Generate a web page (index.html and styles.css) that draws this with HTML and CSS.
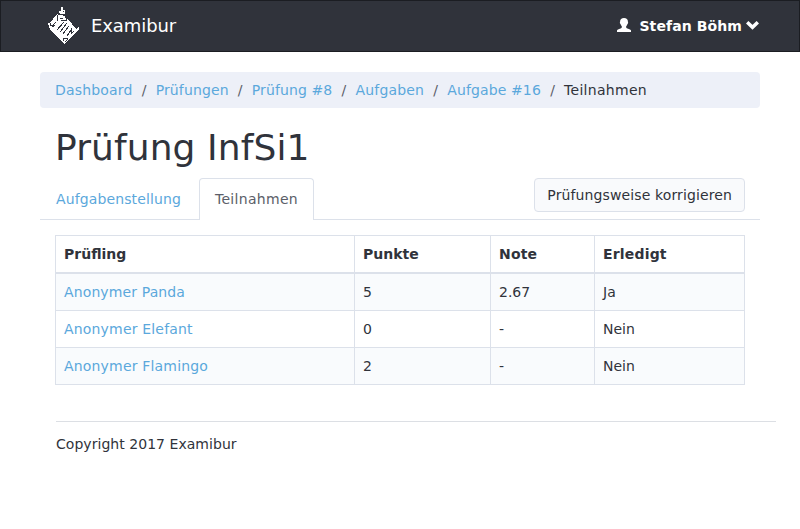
FILE: index.html
```html
<!DOCTYPE html>
<html lang="de">
<head>
<meta charset="utf-8">
<title>Examibur</title>
<link rel="stylesheet" href="styles.css">
</head>
<body>
<nav class="navbar">
  <a class="brand" href="#">
    <svg class="logo" width="32" height="38" viewBox="0 0 32 38" shape-rendering="crispEdges" aria-hidden="true">
      <path fill="#fff" d="M9 7 20 12 28 22 30 20H31V23L19 34 17 37H16L4 25 1 20 0 16H2z"/>
      <path fill="none" stroke="#30333b" d="M9 8v5h9v-4M2 16v2h3l3-3M4 20l3-2M9 23l7-8M12 25l7-9M15 27l6-8M19 29l4-6v4l3-3M15 34v-3h4v2l-2 2"/>
      <path fill="#fff" d="M13 0h2v3h2v4h-2v2h2v4h-2v-1h-2v2h-3v-4h2V6h-1V4h2z"/>
      <path fill="#30333b" d="M12 7h3v1h-3zM12 11h3v1h-3zM15 4h1v1h-1z"/>
    </svg>
    <span>Examibur</span>
  </a>
  <a class="user" href="#">
    <svg class="person" width="14" height="14" viewBox="0 0 14 14" aria-hidden="true"><path fill="#fff" d="M7 0C4.500 0 3.100 1.300 3.100 3.500c0 .7-.4.700-.2 1.600.2.800.6.700.8 1.400.2.900 1.200 1.400 1.200 2.200 0 1-.5 1.300-1.400 1.700C1.500 11.300 0 11.500 0 12.500V14h14v-1.500c0-1-1.500-1.200-3.600-2.100C9.500 10 9.100 9.700 9.100 8.700c0-.8 1-1.300 1.200-2.200.2-.7.600-.6.800-1.400.2-.9-.2-.9-.2-1.600C10.900 1.300 9.500 0 7 0z"/></svg>
    <span>Stefan Böhm</span>
    <svg class="chevron" width="13" height="9" viewBox="0 0 13 9" aria-hidden="true"><path fill="none" stroke="#fff" stroke-width="3.4" d="M1.200 1.200 6.500 6.300 11.800 1.200"/></svg>
  </a>
</nav>
<main class="container">
  <ol class="breadcrumb">
    <li><a class="track-2" href="#">Dashboard</a></li>
    <li><a class="track-1" href="#">Prüfungen</a></li>
    <li><a class="track-1" href="#">Prüfung #8</a></li>
    <li><a class="track-2" href="#">Aufgaben</a></li>
    <li><a class="track-1" href="#">Aufgabe #16</a></li>
    <li><span class="track-3">Teilnahmen</span></li>
  </ol>
  <h1>Prüfung InfSi1</h1>
  <div class="tabs">
    <a class="tab track-1" href="#">Aufgabenstellung</a>
    <a class="tab active track-3" href="#">Teilnahmen</a>
    <button class="btn track-1" type="button">Prüfungsweise korrigieren</button>
  </div>
  <table>
    <colgroup><col class="c1"><col class="c2"><col class="c3"><col class="c4"></colgroup>
    <thead><tr><th>Prüfling</th><th>Punkte</th><th class="track-2">Note</th><th class="track-2">Erledigt</th></tr></thead>
    <tbody>
      <tr><td><a class="track-1" href="#">Anonymer Panda</a></td><td>5</td><td>2.67</td><td>Ja</td></tr>
      <tr><td><a class="track-2" href="#">Anonymer Elefant</a></td><td>0</td><td>-</td><td>Nein</td></tr>
      <tr><td><a class="track-2" href="#">Anonymer Flamingo</a></td><td>2</td><td>-</td><td>Nein</td></tr>
    </tbody>
  </table>
  <footer>Copyright 2017 Examibur</footer>
</main>
</body>
</html>
```
FILE: styles.css
```css
* { box-sizing: border-box; }
body {
  margin: 0;
  font: 14px/20px "DejaVu Sans", sans-serif;
  color: #30333b;
  background: #fff;
}
a { color: #5ba8dc; text-decoration: none; }
.track-1 { letter-spacing: .12px; }
.track-2 { letter-spacing: .18px; }
.track-3 { letter-spacing: .3px; }
.navbar {
  display: flex;
  justify-content: space-between;
  height: 52px;
  padding: 0 40px 0 47px;
  border: 1px solid #1b1d22;
  background: #30333b;
}
.brand { display: flex; align-items: center; gap: 11px; color: #fff; font-size: 18px; letter-spacing: -.08px; }
.user { display: flex; align-items: center; color: #fff; font-weight: bold; letter-spacing: .1px; }
.person { margin: -2px 8px 0 0; }
.chevron { margin: -2px 0 0 4px; }
.container { width: 720px; margin: 20px auto 0; }
.breadcrumb {
  display: flex;
  height: 36px;
  margin: 0;
  padding: 8px 15px;
  list-style: none;
  border-radius: 4px;
  background: #edf0f8;
}
.breadcrumb li + li::before { content: "/"; padding: 0 9.2px; color: #5b5e68; }
h1 { margin: 20px 15px 10px; font-size: 36px; line-height: 40px; font-weight: normal; letter-spacing: .1px; }
.tabs {
  display: flex;
  align-items: flex-start;
  height: 42px;
  border-bottom: 1px solid #dce1ea;
}
.tab { height: 42px; margin-right: 2px; padding: 10px 15px; border: 1px solid transparent; border-bottom: 0; border-radius: 4px 4px 0 0; }
.tab.active { color: #5b5e68; border-color: #dce1ea; background: #fff; }
.btn {
  height: 34px;
  margin: 0 15px 0 auto;
  padding: 0 12px;
  border: 1px solid #dce1ea;
  border-radius: 4px;
  background: #f9fafc;
  color: #30333b;
  font: inherit;
}
table { width: 690px; margin: 15px 15px 0; border-collapse: collapse; table-layout: fixed; }
.c1 { width: 299px; }
.c2 { width: 136px; }
.c3 { width: 104px; }
th, td { padding: 8px; border: 1px solid #dce1ea; text-align: left; }
th { border-bottom-width: 2px; }
tbody tr:nth-child(odd) { background: #f9fbfd; }
footer { width: 720px; margin: 36px 0 0 16px; padding-top: 12px; border-top: 1px solid #dcdfe4; letter-spacing: .04px; }
```
